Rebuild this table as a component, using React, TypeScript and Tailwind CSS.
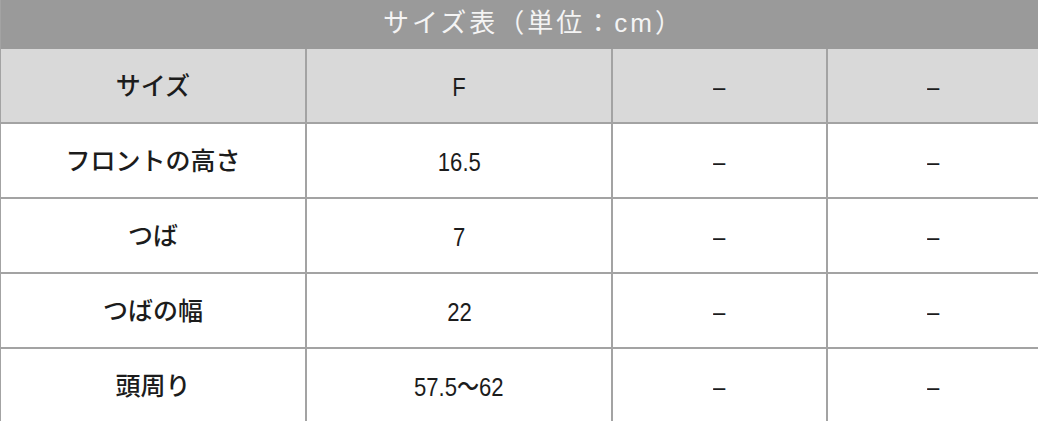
const rows: string[][] = [
  ['フロントの高さ', '16.5', '–', '–'],
  ['つば', '7', '–', '–'],
  ['つばの幅', '22', '–', '–'],
  ['頭周り', '57.5〜62', '–', '–'],
]

const font = { fontFamily: '"Liberation Sans", "Noto Sans CJK JP", sans-serif' }

function Row({ cells, head = false }: { cells: string[]; head?: boolean }) {
  const bg = head ? 'bg-[#d9d9d9]' : 'bg-white'
  return (
    <div className={`grid grid-cols-[306px_306px_215px_1fr] h-[75px] border-b-2 border-[#a3a3a3] ${bg}`}>
      {cells.map((c, i) => (
        <div key={i} className={`flex items-center justify-center pt-[3px] text-[#1c1c1c] ${i < 3 ? 'border-r-2 border-[#a3a3a3]' : ''}`}>
          {i === 0 ? (
            <span className="text-[25px] font-medium">{c}</span>
          ) : (
            <span className="inline-block text-[26px] font-medium scale-x-[0.85]">{c}</span>
          )}
        </div>
      ))}
    </div>
  )
}

export default function App() {
  return (
    <div className="w-[1038px] h-[421px] overflow-hidden bg-white border-l border-[#a3a3a3]" style={font}>
      <div className="h-[49px] bg-[#9a9a9a] flex items-center justify-center text-[26px] text-[#f4f4f4] tracking-[3px] pl-[28px] pb-[2px]">
        サイズ表（単位：cm）
      </div>
      <Row head cells={['サイズ', 'F', '–', '–']} />
      {rows.map((r, i) => <Row key={i} cells={r} />)}
    </div>
  )
}
